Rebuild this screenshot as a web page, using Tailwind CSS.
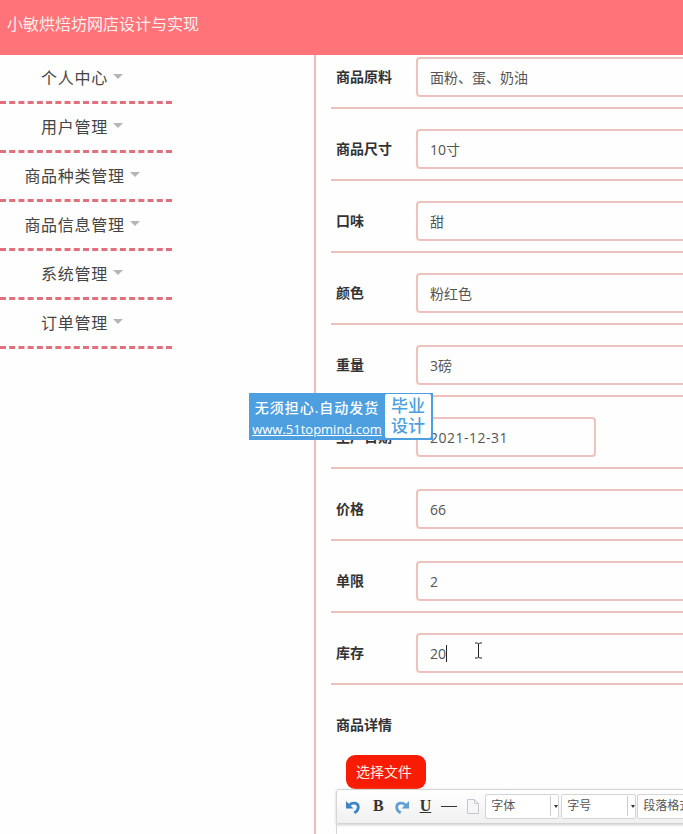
<!DOCTYPE html>
<html lang="zh">
  <head>
    <meta charset="UTF-8" />
    <title>小敏烘焙坊网店设计与实现</title>
    <script src="https://cdn.jsdelivr.net/npm/@tailwindcss/browser@4"></script>
  </head>
  <body class="relative h-[834px] w-[683px] overflow-hidden bg-[#fefefe] font-['Open_Sans','Noto_Sans_CJK_SC',sans-serif] text-[#333]">
    <!-- header -->
    <div class="flex h-[55px] items-center bg-[#ff7379] pl-[7px] pb-[7px] text-[16px] text-[#fdeeee]">小敏烘焙坊网店设计与实现</div>

    <div class="flex h-[779px]">
      <!-- side menu -->
      <div class="w-[172px] shrink-0">
        <div class="flex h-[49px] items-center justify-center border-b-[3px] border-dashed border-[#e0707c] pr-[8px] text-[16px] tracking-[0.7px] text-[#444]">个人中心<span class="mt-[-3px] ml-[5px] border-x-[5px] border-t-[5px] border-x-transparent border-t-[#b5b5b5]"></span></div>
        <div class="flex h-[49px] items-center justify-center border-b-[3px] border-dashed border-[#e0707c] pr-[8px] text-[16px] tracking-[0.7px] text-[#444]">用户管理<span class="mt-[-3px] ml-[5px] border-x-[5px] border-t-[5px] border-x-transparent border-t-[#b5b5b5]"></span></div>
        <div class="flex h-[49px] items-center justify-center border-b-[3px] border-dashed border-[#e0707c] pr-[8px] text-[16px] tracking-[0.7px] text-[#444]">商品种类管理<span class="mt-[-3px] ml-[5px] border-x-[5px] border-t-[5px] border-x-transparent border-t-[#b5b5b5]"></span></div>
        <div class="flex h-[49px] items-center justify-center border-b-[3px] border-dashed border-[#e0707c] pr-[8px] text-[16px] tracking-[0.7px] text-[#444]">商品信息管理<span class="mt-[-3px] ml-[5px] border-x-[5px] border-t-[5px] border-x-transparent border-t-[#b5b5b5]"></span></div>
        <div class="flex h-[49px] items-center justify-center border-b-[3px] border-dashed border-[#e0707c] pr-[8px] text-[16px] tracking-[0.7px] text-[#444]">系统管理<span class="mt-[-3px] ml-[5px] border-x-[5px] border-t-[5px] border-x-transparent border-t-[#b5b5b5]"></span></div>
        <div class="flex h-[49px] items-center justify-center border-b-[3px] border-dashed border-[#e0707c] pr-[8px] text-[16px] tracking-[0.7px] text-[#444]">订单管理<span class="mt-[-3px] ml-[5px] border-x-[5px] border-t-[5px] border-x-transparent border-t-[#b5b5b5]"></span></div>
      </div>

      <!-- form -->
      <div class="ml-[142px] w-[369px] shrink-0 border-l-2 border-[#f0b8b8] pl-[15px]">
        <div class="flex h-[54px] items-start border-b-2 border-[#efc0bb] pt-[2px]">
          <span class="mt-[9px] w-[85px] shrink-0 pl-[5px] text-[14px] font-bold">商品原料</span>
          <div class="flex h-[40px] w-[300px] shrink-0 items-center rounded-[4px] border-2 border-[#eec2bd] pl-[12px] text-[14px] text-[#555]">面粉、蛋、奶油</div>
        </div>
        <div class="flex h-[72px] items-start border-b-2 border-[#efc0bb] pt-[20px]">
          <span class="mt-[9px] w-[85px] shrink-0 pl-[5px] text-[14px] font-bold">商品尺寸</span>
          <div class="flex h-[40px] w-[300px] shrink-0 items-center rounded-[4px] border-2 border-[#eec2bd] pl-[12px] text-[14px] text-[#555]">10寸</div>
        </div>
        <div class="flex h-[72px] items-start border-b-2 border-[#efc0bb] pt-[20px]">
          <span class="mt-[9px] w-[85px] shrink-0 pl-[5px] text-[14px] font-bold">口味</span>
          <div class="flex h-[40px] w-[300px] shrink-0 items-center rounded-[4px] border-2 border-[#eec2bd] pl-[12px] text-[14px] text-[#555]">甜</div>
        </div>
        <div class="flex h-[72px] items-start border-b-2 border-[#efc0bb] pt-[20px]">
          <span class="mt-[9px] w-[85px] shrink-0 pl-[5px] text-[14px] font-bold">颜色</span>
          <div class="flex h-[40px] w-[300px] shrink-0 items-center rounded-[4px] border-2 border-[#eec2bd] pl-[12px] text-[14px] text-[#555]">粉红色</div>
        </div>
        <div class="flex h-[72px] items-start border-b-2 border-[#efc0bb] pt-[20px]">
          <span class="mt-[9px] w-[85px] shrink-0 pl-[5px] text-[14px] font-bold">重量</span>
          <div class="flex h-[40px] w-[300px] shrink-0 items-center rounded-[4px] border-2 border-[#eec2bd] pl-[12px] text-[14px] text-[#555]">3磅</div>
        </div>
        <div class="flex h-[72px] items-start border-b-2 border-[#efc0bb] pt-[20px]">
          <span class="mt-[9px] w-[85px] shrink-0 pl-[5px] text-[14px] font-bold">生产日期</span>
          <div class="flex h-[40px] w-[180px] shrink-0 items-center rounded-[4px] border-2 border-[#eec2bd] pl-[12px] text-[14px] tracking-[0.5px] text-[#555]">2021-12-31</div>
        </div>
        <div class="flex h-[72px] items-start border-b-2 border-[#efc0bb] pt-[20px]">
          <span class="mt-[9px] w-[85px] shrink-0 pl-[5px] text-[14px] font-bold">价格</span>
          <div class="flex h-[40px] w-[300px] shrink-0 items-center rounded-[4px] border-2 border-[#eec2bd] pl-[12px] text-[14px] text-[#555]">66</div>
        </div>
        <div class="flex h-[72px] items-start border-b-2 border-[#efc0bb] pt-[20px]">
          <span class="mt-[9px] w-[85px] shrink-0 pl-[5px] text-[14px] font-bold">单限</span>
          <div class="flex h-[40px] w-[300px] shrink-0 items-center rounded-[4px] border-2 border-[#eec2bd] pl-[12px] text-[14px] text-[#555]">2</div>
        </div>
        <div class="flex h-[72px] items-start border-b-2 border-[#efc0bb] pt-[20px]">
          <span class="mt-[9px] w-[85px] shrink-0 pl-[5px] text-[14px] font-bold">库存</span>
          <div class="flex h-[40px] w-[300px] shrink-0 items-center rounded-[4px] border-2 border-[#eec2bd] pl-[12px] text-[14px] text-[#555]">20<span class="h-[17px] w-px bg-[#222]"></span></div>
        </div>
        <div class="pt-[29px] pl-[5px] text-[14px] font-bold">商品详情</div>

        <!-- upload + editor -->
        <div class="mt-[20px] ml-[15px] flex h-[34px] w-[80px] items-center justify-center rounded-[9px] bg-[#f91c04] pr-[4px] pb-[1px] text-[14px] text-[#fdeee0]">选择文件</div>
        <div class="ml-[5px] flex h-[35px] w-[360px] items-center rounded-t-[3px] border border-[#d4d4d4] bg-gradient-to-b from-white to-[#f0f0f0] pl-[9px] shadow-[0_1px_3px_#ccc]">
          <svg class="h-[14px] w-[14px] shrink-0" viewBox="0 0 14 14"><path d="M0 1v7.500h7.500z" fill="#3d84c6"/><path d="M3.500 5C6.500 2 12.300 2.500 12.300 7.200c0 2.500-1.500 4.300-4 5.600" fill="none" stroke="#3d84c6" stroke-width="2.800"/></svg>
          <span class="ml-[13px] shrink-0 pb-[1px] font-['Liberation_Serif',serif] text-[16px] font-bold">B</span>
          <svg class="ml-[11px] h-[14px] w-[14px] shrink-0 scale-x-[-1]" viewBox="0 0 14 14"><path d="M0 1v7.500h7.500z" fill="#5f9fd4"/><path d="M3.500 5C6.500 2 12.300 2.500 12.300 7.200c0 2.500-1.500 4.300-4 5.600" fill="none" stroke="#5f9fd4" stroke-width="2.800"/></svg>
          <span class="ml-[11px] shrink-0 pb-[1px] font-['Liberation_Serif',serif] text-[16px] font-bold underline">U</span>
          <span class="ml-[10px] h-px w-[16px] shrink-0 bg-[#333]"></span>
          <svg class="ml-[10px] h-[15px] w-[12px] shrink-0" viewBox="0 0 12 15"><path d="M.5.500h7l4 4v10H.5z M7.500.500v4h4" fill="#f6f6f6" stroke="#c4c8cc"/></svg>
          <div class="ml-[6px] flex h-[25px] w-[74px] shrink-0 items-center rounded-[2px] border border-[#d4d4d4] bg-white pb-[1px] pl-[5px] text-[12px] text-[#555]">字体<span class="ml-auto flex h-[20px] w-[8px] items-center justify-center border-l border-[#ccc]"></span></div>
          <span class="ml-[-5px] w-0 border-x-[2.500px] border-t-[3px] border-x-transparent border-t-[#333]"></span>
          <div class="ml-[3px] flex h-[25px] w-[75px] shrink-0 items-center rounded-[2px] border border-[#d4d4d4] bg-white pb-[1px] pl-[5px] text-[12px] text-[#555]">字号<span class="ml-auto flex h-[20px] w-[8px] items-center justify-center border-l border-[#ccc]"></span></div>
          <span class="ml-[-5px] w-0 border-x-[2.500px] border-t-[3px] border-x-transparent border-t-[#333]"></span>
          <div class="ml-[2px] flex h-[25px] w-[74px] shrink-0 items-center rounded-[2px] border border-[#d4d4d4] bg-white pb-[1px] pl-[5px] text-[12px] text-[#555]">段落格式</div>
        </div>
        <div class="ml-[5px] h-[20px] w-[360px] border-l border-[#d4d4d4]"></div>
      </div>
    </div>

    <!-- watermark -->
    <div class="absolute top-[393px] left-[249px] flex h-[47px] w-[184px] bg-[#4d9fdf]">
      <div class="flex w-[136px] flex-col items-center pt-[6px] text-white">
        <span class="text-[14px] leading-[18px] font-medium tracking-[1px]">无须担心.自动发货</span>
        <span class="mt-[3px] text-[13px] leading-[18px] font-medium underline">www.51topmind.com</span>
      </div>
      <div class="mt-px flex h-[44px] w-[46px] items-center justify-center rounded-[2px] bg-white text-center text-[17px] leading-[20px] font-medium text-[#4d9fdf]">毕业<br />设计</div>
    </div>

    <!-- mouse cursor -->
    <svg class="absolute top-[642px] left-[474px] h-[17px] w-[9px]" viewBox="0 0 9 17"><path d="M1 1h2.500L4.500 2l1-1H8M4.500 2v13M1 16h2.500l1-1 1 1H8" fill="none" stroke="#222"/></svg>
  </body>
</html>
